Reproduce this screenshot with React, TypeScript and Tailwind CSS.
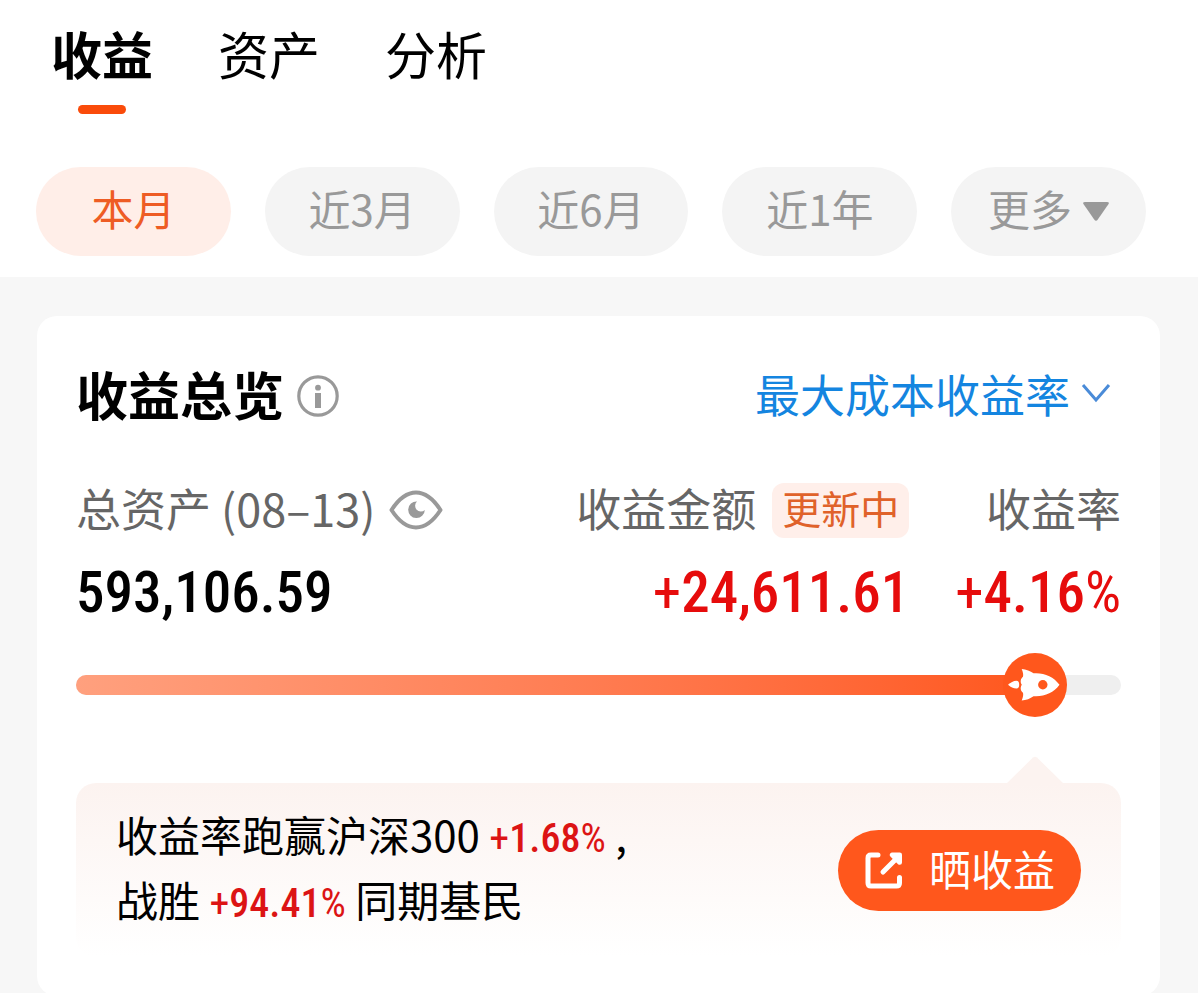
import { useState } from "react";

const tabs = ["收益", "资产", "分析"];
const periods = ["本月", "近3月", "近6月", "近1年"];

const progress = 91.8;

function InfoIcon() {
  return (
    <svg viewBox="0 0 42 42" className="size-[42px]" fill="none" aria-hidden="true">
      <circle cx="21" cy="21" r="19.2" stroke="#999" strokeWidth="3.2" />
      <circle cx="21" cy="12.700" r="2.900" fill="#999" />
      <path d="M18 18h6v15h-6z" fill="#999" />
    </svg>
  );
}

function EyeIcon() {
  return (
    <svg viewBox="0 0 54 40" className="h-10 w-[54px]" fill="none" aria-hidden="true">
      <path
        d="M2.500 20C9 10 17.500 2.500 27 2.500S45 10 51.500 20C45 30 36.500 37.500 27 37.500S9 30 2.500 20Z"
        stroke="#999"
        strokeWidth="4"
        strokeLinejoin="round"
      />
      <path d="M28 11.500A8.300 8.300 0 1 0 35.800 20A4.600 4.600 0 1 1 28 11.500Z" fill="#999" />
    </svg>
  );
}

function RocketIcon() {
  return (
    <svg viewBox="0 0 64 64" className="size-16" aria-hidden="true">
      <circle cx="32" cy="32" r="32" fill="#ff571c" />
      <path
        d="M18.700 16C23 16.500 27.500 18 30.500 20.300C41 19.500 50.500 23.500 56.500 31.800C50.500 40 41 44 30.500 43.200C27.500 45.500 23 47.200 18.700 47.500C20 44.500 20.500 42 20 39.800C17.500 38 17 34.500 18.800 31.800C17 29 17.500 25.500 20 23.700C20.500 21.500 20 19 18.700 16Z"
        fill="#fff"
      />
      <path d="M5 31.800C7.500 29.500 10.500 27.800 13.500 27.800Q16.200 28 16.200 31.800T13.500 35.600C10.500 35.600 7.500 34 5 31.800Z" fill="#fff" />
      <circle cx="39.800" cy="31.800" r="4.700" fill="#ff571c" />
    </svg>
  );
}

function ShareIcon() {
  return (
    <svg
      viewBox="0 0 38 38"
      className="size-[38px]"
      fill="none"
      stroke="#fff"
      strokeWidth="5"
      strokeLinecap="round"
      strokeLinejoin="round"
      aria-hidden="true"
    >
      <path d="M14 4H7Q4 4 4 7V32Q4 35 7 35H32.500Q35.500 35 35.500 32V26.500" />
      <path d="M19 21L33 7" />
      <path d="M28 3.800H35.700V11.500Z" fill="#fff" strokeWidth="4.600" />
    </svg>
  );
}

export default function App() {
  const [tab, setTab] = useState("收益");
  const [period, setPeriod] = useState("本月");

  return (
    <div className="min-h-screen bg-[#f7f7f7] font-['Noto_Sans_CJK_SC',sans-serif] text-black">
      <header className="bg-white pb-[21px]">
        {/* Tab navigation */}
        <nav className="flex gap-[65px] pl-[51px] pt-[13px]">
          {tabs.map((t) => (
            <button
              key={t}
              onClick={() => setTab(t)}
              className={`flex flex-col items-center text-[51px] leading-[80px] ${
                tab === t ? "font-bold" : "font-normal"
              }`}
            >
              {t}
              <span className={`mt-3 h-[9px] w-12 rounded-full ${tab === t ? "bg-[#fa4b0a]" : ""}`} />
            </button>
          ))}
        </nav>

        {/* Period filter */}
        <div className="mt-[53px] grid grid-cols-5 gap-[34px] pl-9 pr-[52px] text-[42px] leading-[80px]">
          {periods.map((p) => (
            <button
              key={p}
              onClick={() => setPeriod(p)}
              className={`h-[89px] rounded-full pb-2 ${
                period === p ? "bg-[#ffeee8] text-[#ee5c24]" : "bg-[#f4f4f4] text-[#999]"
              }`}
            >
              {p}
            </button>
          ))}
          <div className="flex h-[89px] items-center justify-center gap-2.5 rounded-full bg-[#f4f4f4] text-[#999]">
            <select aria-label="更多" className="appearance-none bg-transparent pb-2 outline-none">
              <option>更多</option>
            </select>
            <svg viewBox="0 0 26 19" className="h-[19px] w-[26px]" aria-hidden="true">
              <path d="M2 0H24Q27 0 25.200 2.600L14.800 17.500Q13 20 11.200 17.500L.8 2.600Q-1 0 2 0Z" fill="#999" />
            </svg>
          </div>
        </div>
      </header>

      <main className="pl-[37px] pr-[38px] pt-[39px]">
        <section className="rounded-[20px] bg-white px-[39px] pb-[39px] pt-10">
          <div className="flex h-20 items-center justify-between">
            <div className="flex items-center gap-[13px]">
              <h1 className="pb-1 text-[52px] font-bold leading-[76px]">收益总览</h1>
              <button aria-label="说明">
                <InfoIcon />
              </button>
            </div>
            <div className="flex items-center gap-2.5 pr-2.5 text-[#1485e0]">
              <select
                aria-label="收益率类型"
                className="appearance-none bg-transparent pb-1 text-[45px] leading-[76px] outline-none"
              >
                <option>最大成本收益率</option>
              </select>
              <svg viewBox="0 0 30 20" className="mb-1.5 h-5 w-[30px]" fill="none" aria-hidden="true">
                <path d="M2 2L15 17L28 2" stroke="#4a8bd8" strokeWidth="3" />
              </svg>
            </div>
          </div>

          {/* Totals */}
          <div className="mt-[46px] flex justify-between">
            <div>
              <div className="flex h-14 items-center gap-[13px] text-[45px] leading-[52px] text-[#666]">
                <span className="pb-1">总资产 (08–13)</span>
                <button aria-label="隐藏金额">
                  <EyeIcon />
                </button>
              </div>
              <div className="mt-5 font-['Roboto_Condensed',Roboto,sans-serif] text-[57px] font-medium leading-[70px]">
                593,106.59
              </div>
            </div>
            <div className="flex gap-[46px] text-right">
              <div>
                <div className="flex h-14 items-center justify-end gap-4 text-[45px] leading-[52px] text-[#666]">
                  <span className="pb-1">收益金额</span>
                  <span className="rounded-xl bg-[#ffefea] px-2.5 pb-1.5 text-[39px] leading-[49px] text-[#e0622a]">
                    更新中
                  </span>
                </div>
                <div className="mt-5 font-['Roboto_Condensed',Roboto,sans-serif] text-[57px] font-medium leading-[70px] text-[#e60c0c]">
                  <span className="font-normal">+</span>24,611.61
                </div>
              </div>
              <div>
                <div className="flex h-14 items-center justify-end text-[45px] leading-[52px] text-[#666]">
                  <span className="pb-1">收益率</span>
                </div>
                <div className="mt-5 font-['Roboto_Condensed',Roboto,sans-serif] text-[57px] font-medium leading-[70px] text-[#e60c0c]">
                  <span className="font-normal">+</span>4.16<span className="font-normal">%</span>
                </div>
              </div>
            </div>
          </div>

          {/* Progress against the index */}
          <div
            role="progressbar"
            aria-label="战胜同期基民"
            aria-valuenow={progress}
            className="relative mt-[25px] flex h-16 items-center"
          >
            <div className="h-5 w-full overflow-hidden rounded-full bg-[#efefef]">
              <div
                className="h-full bg-linear-to-r from-[#ffa07e] to-[#ff571c]"
                style={{ width: `${progress}%` }}
              />
            </div>
            <div className="absolute -translate-x-1/2" style={{ left: `${progress}%` }}>
              <RocketIcon />
            </div>
          </div>

          <div className="relative mt-[66px] flex items-center justify-between rounded-[20px] bg-linear-to-b from-[#fcf3f0] to-white px-10 py-[18px]">
            <svg
              viewBox="0 0 58 28"
              className="absolute -top-[27px] h-7 w-[58px] -translate-x-1/2"
              style={{ left: `${progress}%` }}
              aria-hidden="true"
            >
              <path d="M0 28L27 1.500Q29 0 31 1.500L58 28Z" fill="#fcf3f0" />
            </svg>
            <div className="pb-2 text-[42px] leading-[65px]">
              <p>
                收益率跑赢沪深300{" "}
                <span className="font-['Roboto_Condensed',Roboto,sans-serif] text-[40px] font-medium leading-none text-[#dc1414]">
                  <span className="font-normal">+</span>1.68<span className="font-normal">%</span>
                </span>{" "}
                ,
              </p>
              <p>
                战胜{" "}
                <span className="font-['Roboto_Condensed',Roboto,sans-serif] text-[40px] font-medium leading-none text-[#dc1414]">
                  <span className="font-normal">+</span>94.41<span className="font-normal">%</span>
                </span>{" "}
                同期基民
              </p>
            </div>
            <button className="flex h-[81px] items-center gap-[27px] rounded-full bg-[#ff571c] px-[26px] text-[42px] leading-[76px] text-white">
              <ShareIcon />
              <span className="pb-1">晒收益</span>
            </button>
          </div>
        </section>
      </main>
    </div>
  );
}
